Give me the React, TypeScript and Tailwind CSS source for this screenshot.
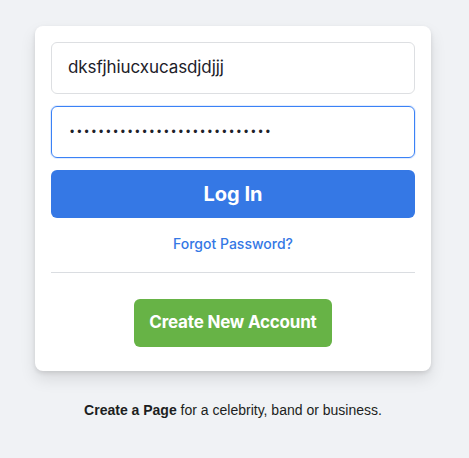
import React from "react";

export default function App() {
  const dots = "•".repeat(28);
  return (
    <div className="min-h-screen w-full bg-[#f0f2f5] pt-[26px] pl-[35px]" style={{ fontFamily: "Inter, 'Noto Sans', sans-serif" }}>
      <div className="w-[396px]">
        <div className="rounded-lg bg-white p-4 pb-6 shadow-[0_2px_4px_rgba(0,0,0,0.1),0_8px_16px_rgba(0,0,0,0.1)]">
          <div className="flex flex-col gap-3">
            <div className="flex h-[52px] items-center rounded-md border border-[#dddfe2] px-4 text-[17px] tracking-[-0.1px] text-[#1d2129]">
              dksfjhiucxucasdjdjjj
            </div>
            <div className="flex h-[52px] items-center rounded-md border border-[#3b82f6] px-4 shadow-[0_0_0_1px_rgba(59,130,246,0.15)]">
              <span className="pl-[2px] text-[12px] tracking-[3.05px] text-[#1d2129]" style={{ fontFamily: "'Liberation Sans', Arial, sans-serif" }}>
                {dots}
              </span>
            </div>
            <button className="flex h-12 w-full items-center justify-center rounded-md bg-[#3578e5] text-[20px] font-bold text-white">
              Log In
            </button>
          </div>
          <div className="mt-4 flex justify-center">
            <span className="text-[14px] font-medium leading-[19px] text-[#3578e5]">Forgot Password?</span>
          </div>
          <div className="mt-[19px] h-px w-full bg-[#dadde1]" />
          <div className="mt-[26px] flex justify-center">
            <button className="flex h-12 w-[198px] items-center justify-center rounded-md bg-[#67b346] text-[17px] font-bold tracking-[-0.2px] text-white">
              Create New Account
            </button>
          </div>
        </div>
        <p className="mt-[29px] text-center text-[14px] text-[#1c1e21]" style={{ fontFamily: "'Liberation Sans', Arial, sans-serif" }}>
          <span className="font-bold">Create a Page</span> for a celebrity, band or business.
        </p>
      </div>
    </div>
  );
}
